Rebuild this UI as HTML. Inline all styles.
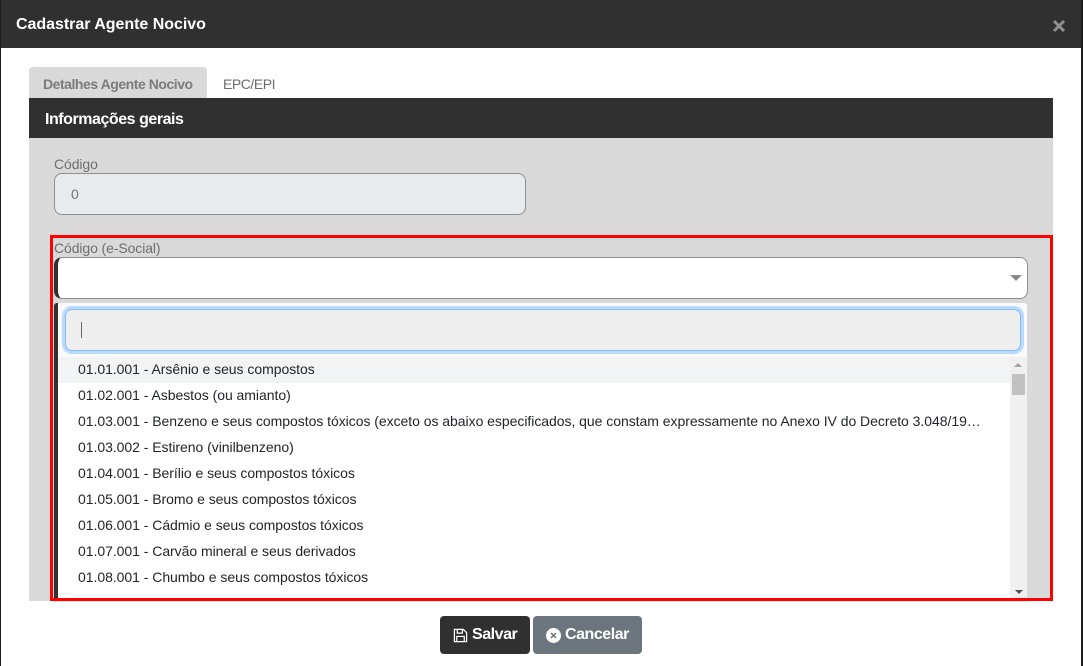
<!DOCTYPE html>
<html lang="pt-BR">
<head>
<meta charset="utf-8">
<title>Cadastrar Agente Nocivo</title>
<style>
html,body{margin:0;padding:0;width:1083px;height:666px;overflow:hidden;background:#fff;font-family:"Liberation Sans",sans-serif;}
div{position:absolute;box-sizing:border-box;white-space:nowrap;}
.edgeL{left:0;top:0;width:1px;height:666px;background:#1c1c1c;}
.edgeR{left:1081px;top:0;width:2px;height:666px;background:#1c1c1c;}
.head{left:1px;top:0;width:1080px;height:48px;background:#303030;color:#fff;font-weight:bold;font-size:16px;line-height:50px;padding-left:15px;letter-spacing:-.03px;}
.close{left:1052px;top:19px;}
.tab{left:29px;top:67px;width:178px;height:31px;background:#d9d9d9;border-radius:4px 4px 0 0;color:#7b7b7b;font-weight:bold;font-size:14px;line-height:35px;padding-left:14px;letter-spacing:-.46px;}
.tab2{left:223px;top:67px;height:31px;color:#6c6c6c;font-size:14px;line-height:35px;letter-spacing:-.45px;}
.panel{left:29px;top:98px;width:1024px;height:503px;background:#d9d9d9;}
.sec{left:29px;top:98px;width:1024px;height:40px;background:#303030;color:#fff;font-weight:bold;font-size:16px;line-height:43px;padding-left:16px;letter-spacing:-.46px;}
.lab{color:#6f6f6f;font-size:14px;line-height:16px;left:54px;letter-spacing:-.1px;}
.inp{left:54px;top:173px;width:472px;height:42px;background:#e8ebee;border:1px solid #8e8e8e;border-radius:8px;color:#6f767c;font-size:14px;line-height:41px;padding-left:16px;}
.sel{left:54px;top:257px;width:974px;height:42px;background:#fff;border:1px solid #8e8e8e;border-left:4px solid #303030;border-radius:8px;}
.arrow{left:1010px;top:275px;width:0;height:0;border-left:6px solid transparent;border-right:6px solid transparent;border-top:6px solid #8a8a8a;}
.drop{left:54px;top:303px;width:973px;height:299px;background:#f8f9fa;border-left:4px solid #303030;border-radius:3px 3px 0 0;overflow:hidden;}
.search{left:65px;top:309px;width:956px;height:42px;background:#eeeeee;border:1px solid #80bdff;border-radius:7px;box-shadow:0 0 0 3px #bbdafd;}
.caret{left:81px;top:322px;width:1px;height:16px;background:#666;}
.list{left:58px;top:357px;width:969px;height:245px;background:#fff;overflow:hidden;}
.it{left:0;width:952px;height:26px;color:#212529;font-size:14px;line-height:24px;padding-left:20px;letter-spacing:-.04px;overflow:hidden;}
.hl{background:#f2f3f5;}
.sb{left:1010px;top:357px;width:17px;height:241px;background:#f0f0f0;}
.up{left:1014px;top:363px;width:0;height:0;border-left:4px solid transparent;border-right:4px solid transparent;border-bottom:4px solid #a3a3a3;}
.thumb{left:1012px;top:374px;width:13px;height:21px;background:#c1c1c1;}
.down{left:1015px;top:590px;width:0;height:0;border-left:4px solid transparent;border-right:4px solid transparent;border-top:4px solid #505050;}
.red{left:50px;top:235px;width:1003px;height:366px;border:3px solid #ff0000;}
.line{left:54px;top:601px;width:972px;height:1px;background:#e8e8e8;}
.btn{top:616px;height:38px;border-radius:4px;color:#fff;font-weight:bold;font-size:16px;line-height:37px;letter-spacing:-.46px;}
.save{left:440px;width:90px;background:#303030;padding-left:32px;}
.cancel{left:533px;width:109px;background:#6c757d;padding-left:32px;}
svg{position:absolute;display:block;}
</style>
</head>
<body>
<div class="edgeL"></div>
<div class="edgeR"></div>
<div class="head">Cadastrar Agente Nocivo</div>
<div class="close"><svg width="14" height="14" viewBox="0 0 14 14" style="left:0;top:0"><path d="M2 2L12 12M12 2L2 12" stroke="#8f8f8f" stroke-width="3" fill="none"/></svg></div>
<div class="tab">Detalhes Agente Nocivo</div>
<div class="tab2">EPC/EPI</div>
<div class="panel"></div>
<div class="sec">Informações gerais</div>
<div class="lab" style="top:156px">Código</div>
<div class="inp">0</div>
<div class="lab" style="top:240px">Código (e-Social)</div>
<div class="sel"></div>
<div class="arrow"></div>
<div class="drop"></div>
<div class="search"></div>
<div class="caret"></div>
<div class="list">
<div class="it hl" style="top:0">01.01.001 - Arsênio e seus compostos</div>
<div class="it" style="top:26px">01.02.001 - Asbestos (ou amianto)</div>
<div class="it" style="top:52px">01.03.001 - Benzeno e seus compostos tóxicos (exceto os abaixo especificados, que constam expressamente no Anexo IV do Decreto 3.048/19…</div>
<div class="it" style="top:78px">01.03.002 - Estireno (vinilbenzeno)</div>
<div class="it" style="top:104px">01.04.001 - Berílio e seus compostos tóxicos</div>
<div class="it" style="top:130px">01.05.001 - Bromo e seus compostos tóxicos</div>
<div class="it" style="top:156px">01.06.001 - Cádmio e seus compostos tóxicos</div>
<div class="it" style="top:182px">01.07.001 - Carvão mineral e seus derivados</div>
<div class="it" style="top:208px">01.08.001 - Chumbo e seus compostos tóxicos</div>
</div>
<div class="sb"></div>
<div class="up"></div>
<div class="thumb"></div>
<div class="down"></div>
<div class="red"></div>
<div class="line"></div>
<div class="btn save">Salvar<svg width="15" height="15" viewBox="0 0 16 16" style="left:13px;top:12px"><path d="M1.5 1.5H11L14.5 5V14.5H1.5ZM4.5 1.5V5.5H10V1.5M4 14.5V9H12V14.5" fill="none" stroke="#fff" stroke-width="1.3"/></svg></div>
<div class="btn cancel">Cancelar<svg width="15" height="15" viewBox="0 0 15 15" style="left:13px;top:12px"><circle cx="7.5" cy="7.5" r="7.5" fill="#fff"/><path d="M5 5L10 10M10 5L5 10" stroke="#6c757d" stroke-width="1.5" fill="none"/></svg></div>
</body>
</html>
